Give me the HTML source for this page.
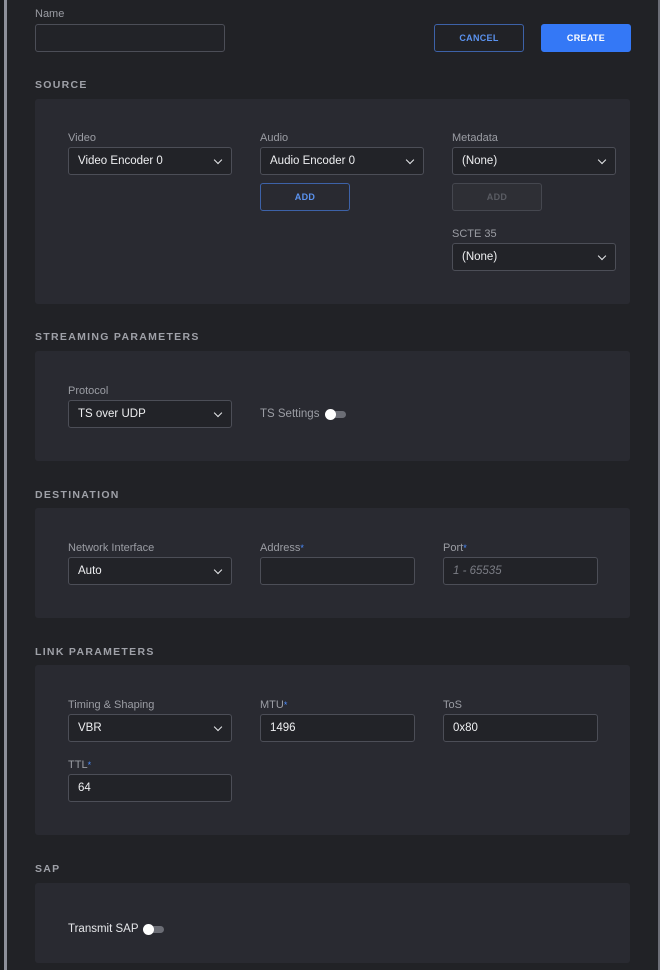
<!DOCTYPE html>
<html><head><meta charset="utf-8"><style>
*{box-sizing:border-box;margin:0;padding:0}
body{width:660px;height:970px;background:#212226;position:relative;overflow:hidden;font-family:"Liberation Sans",sans-serif;font-size:11px;color:#e6e7ea}
.a{position:absolute}
.edge{left:0;top:0;width:4px;height:970px;background:#1a1b1e}
.line{left:4px;top:0;width:3px;height:970px;background:#8d8f99}
.rline{left:658px;top:0;width:2px;height:970px;background:#6d6f78}
.lbl{color:#9b9da4;font-size:11px;line-height:12px}
.h{color:#9fa1a8;font-size:10.5px;letter-spacing:1.3px;font-weight:600;line-height:12px}
.panel{left:35px;width:595px;background:#292a31;border-radius:3px}
.in{border:1px solid #4c4e57;border-radius:3px;background:#222328;height:28px;padding-left:9px;line-height:27px;font-size:11.5px;color:#eeeff1}
.sel:after{content:"";position:absolute;right:10px;top:9px;width:5px;height:5px;border-right:1.5px solid #e6e7ea;border-bottom:1.5px solid #e6e7ea;transform:rotate(45deg)}
.btn{height:28px;border-radius:3px;text-align:center;line-height:26px;font-size:9px;font-weight:bold;letter-spacing:.3px}
.tog{width:20px;height:7px;background:#6b6d75;border-radius:4px}
.tog:before{content:"";position:absolute;left:-1px;top:-2.5px;width:11px;height:11px;border-radius:50%;background:#fff}
.ast{color:#4a8cff;font-size:9px;vertical-align:top}
</style></head><body>
<div class="a edge"></div><div class="a line"></div><div class="a rline"></div>

<div class="a lbl" style="left:35px;top:8px">Name</div>
<div class="a in" style="left:35px;top:24px;width:190px"></div>
<div class="a btn" style="left:434px;top:24px;width:90px;border:1px solid #3d62a8;color:#5b93f0">CANCEL</div>
<div class="a btn" style="left:541px;top:24px;width:90px;background:#3478f6;border:1px solid #3478f6;color:#fff">CREATE</div>

<div class="a h" style="left:35px;top:79px">SOURCE</div>
<div class="a panel" style="top:99px;height:205px"></div>
<div class="a lbl" style="left:68px;top:132px">Video</div>
<div class="a in sel" style="left:68px;top:147px;width:164px">Video Encoder 0</div>
<div class="a lbl" style="left:260px;top:132px">Audio</div>
<div class="a in sel" style="left:260px;top:147px;width:164px">Audio Encoder 0</div>
<div class="a btn" style="left:260px;top:183px;width:90px;border:1px solid #3d62a8;color:#5b93f0">ADD</div>
<div class="a lbl" style="left:452px;top:132px">Metadata</div>
<div class="a in sel" style="left:452px;top:147px;width:164px">(None)</div>
<div class="a btn" style="left:452px;top:183px;width:90px;border:1px solid #45474f;background:#2e2f35;color:#5a5c63">ADD</div>
<div class="a lbl" style="left:452px;top:228px">SCTE 35</div>
<div class="a in sel" style="left:452px;top:243px;width:164px">(None)</div>

<div class="a h" style="left:35px;top:331px">STREAMING PARAMETERS</div>
<div class="a panel" style="top:351px;height:110px"></div>
<div class="a lbl" style="left:68px;top:385px">Protocol</div>
<div class="a in sel" style="left:68px;top:400px;width:164px">TS over UDP</div>
<div class="a lbl" style="left:260px;top:408px;font-size:11.5px">TS Settings</div>
<div class="a tog" style="left:326px;top:411px"></div>

<div class="a h" style="left:35px;top:489px">DESTINATION</div>
<div class="a panel" style="top:508px;height:110px"></div>
<div class="a lbl" style="left:68px;top:542px">Network Interface</div>
<div class="a in sel" style="left:68px;top:557px;width:164px">Auto</div>
<div class="a lbl" style="left:260px;top:542px">Address<span class="ast">*</span></div>
<div class="a in" style="left:260px;top:557px;width:155px"></div>
<div class="a lbl" style="left:443px;top:542px">Port<span class="ast">*</span></div>
<div class="a in" style="left:443px;top:557px;width:155px;color:#7b7d85;font-style:italic">1 - 65535</div>

<div class="a h" style="left:35px;top:646px">LINK PARAMETERS</div>
<div class="a panel" style="top:665px;height:170px"></div>
<div class="a lbl" style="left:68px;top:699px">Timing &amp; Shaping</div>
<div class="a in sel" style="left:68px;top:714px;width:164px">VBR</div>
<div class="a lbl" style="left:260px;top:699px">MTU<span class="ast">*</span></div>
<div class="a in" style="left:260px;top:714px;width:155px">1496</div>
<div class="a lbl" style="left:443px;top:699px">ToS</div>
<div class="a in" style="left:443px;top:714px;width:155px">0x80</div>
<div class="a lbl" style="left:68px;top:759px">TTL<span class="ast">*</span></div>
<div class="a in" style="left:68px;top:774px;width:164px">64</div>

<div class="a h" style="left:35px;top:863px">SAP</div>
<div class="a panel" style="top:883px;height:80px"></div>
<div class="a" style="left:68px;top:923px;font-size:11.5px;color:#e6e7ea">Transmit SAP</div>
<div class="a tog" style="left:144px;top:926px"></div>
</body></html>
